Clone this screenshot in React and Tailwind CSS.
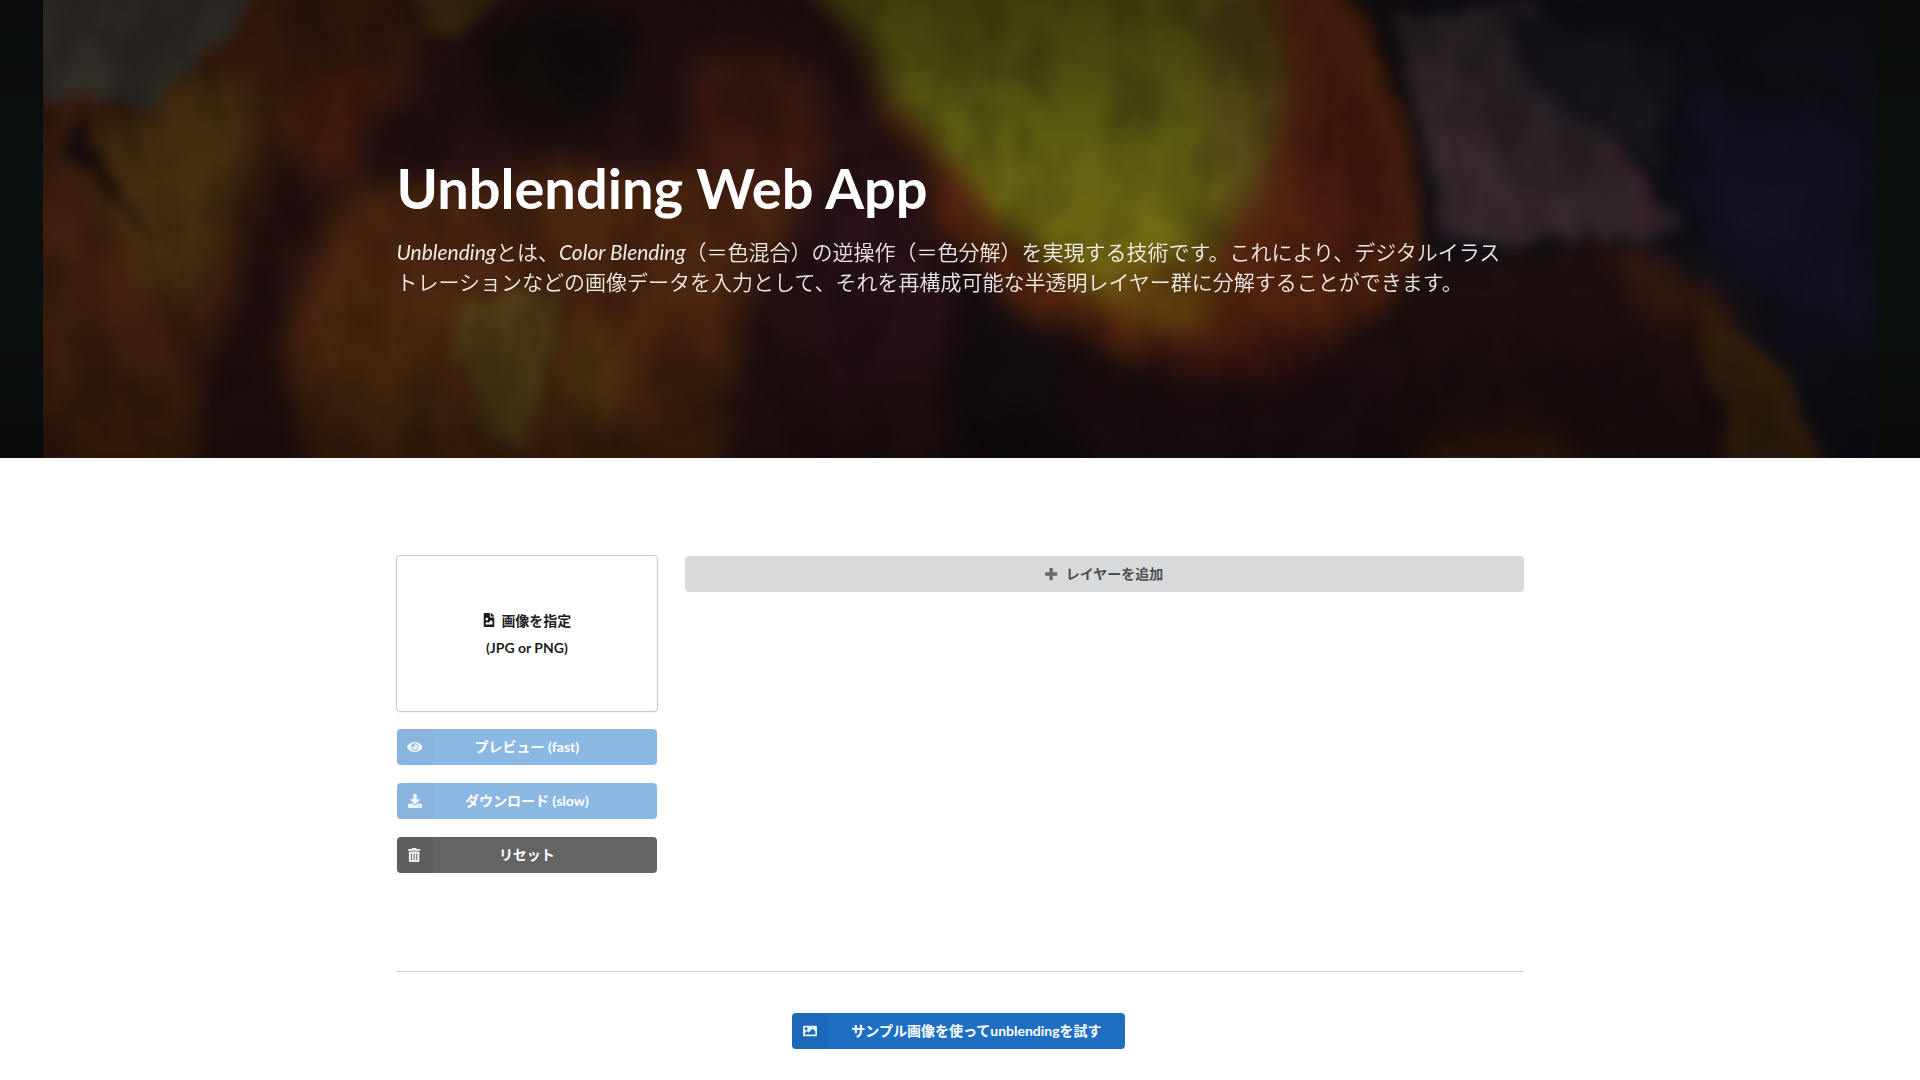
import { FaDownload, FaFileImage, FaImage } from "react-icons/fa";

function Painting() {
  return (
    <svg
      className="absolute inset-0 h-full w-full"
      viewBox="0 0 1920 458"
      preserveAspectRatio="xMidYMid slice"
      aria-hidden="true"
    >
      <defs>
        <filter id="brush" x="-10%" y="-10%" width="120%" height="120%" colorInterpolationFilters="sRGB">
          <feTurbulence type="fractalNoise" baseFrequency="0.012 0.01" numOctaves="3" seed="7" result="n" />
          <feDisplacementMap in="SourceGraphic" in2="n" scale="44" xChannelSelector="R" yChannelSelector="G" />
          <feGaussianBlur stdDeviation="14" />
        </filter>
        <filter id="edge" x="-10%" y="-10%" width="120%" height="120%" colorInterpolationFilters="sRGB">
          <feTurbulence type="fractalNoise" baseFrequency="0.03 0.02" numOctaves="3" seed="4" result="n" />
          <feDisplacementMap in="SourceGraphic" in2="n" scale="34" xChannelSelector="R" yChannelSelector="G" />
          <feGaussianBlur stdDeviation="7" />
        </filter>
        <filter id="grain" x="0" y="0" width="100%" height="100%" colorInterpolationFilters="sRGB">
          <feTurbulence type="fractalNoise" baseFrequency="0.018 0.012" numOctaves="4" seed="12" />
          <feColorMatrix values="0 0 0 0 0.03  0 0 0 0 0.02  0 0 0 0 0.03  2 0 0 0 -0.75" />
          <feGaussianBlur stdDeviation="3" />
        </filter>
        <linearGradient id="sun" x1="0" y1="0" x2="0" y2="1">
          <stop offset="0" stopColor="#4c4a10" />
          <stop offset="0.5" stopColor="#626414" />
          <stop offset="0.8" stopColor="#726b13" />
          <stop offset="1" stopColor="#65500f" />
        </linearGradient>
        <linearGradient id="shade" x1="0" y1="0" x2="0" y2="1">
          <stop offset="0" stopColor="#000" stopOpacity="0.22" />
          <stop offset="0.4" stopColor="#000" stopOpacity="0" />
          <stop offset="0.65" stopColor="#000" stopOpacity="0" />
          <stop offset="1" stopColor="#000" stopOpacity="0.3" />
        </linearGradient>
      </defs>
      <rect width="1920" height="458" fill="#1c100f" />
      <g filter="url(#brush)">
        <path d="M30 -40H440L400 120L330 230L250 380L240 500H30Z" fill="#3b1d0f" />
        <path d="M150 80L260 90L250 180L200 290L140 280L80 160Z" fill="#482f10" />
        <path d="M300 60H400L380 160L320 200L290 140Z" fill="#451d0f" />
        <path d="M45 190L130 270L190 360L190 500H45Z" fill="#42210f" />
        <path d="M270 150L340 190L300 320L280 500H195L200 380L240 280Z" fill="#24110f" />
        <path d="M390 -30H830L930 150L960 250L980 500H720L640 200L400 170L350 150L430 50Z" fill="#261212" />
        <path d="M460 30L560 10L600 90L560 150L480 120Z" fill="#160e0c" />
        <path d="M520 0L640 30L630 100L560 90Z" fill="#120d0e" />
        <path d="M690 100L740 40L800 70L830 150L790 220L670 190Z" fill="#401b12" />
        <path d="M360 190L480 175L620 165L760 190L790 250L740 310L720 500H300L290 340L310 250Z" fill="#4a2510" />
        <path d="M320 300L460 290L450 440L340 420Z" fill="#4f2c0f" />
        <path d="M560 320L640 330L620 440L560 430Z" fill="#563611" />
        <path d="M800 220L900 180L940 330L920 380L820 400Z" fill="#28111a" />
        <path d="M880 90L960 150L1030 260L1150 300L1220 240L1260 60L1280 -40L1340 -40L1405 70L1420 220L1390 310L1290 365L1150 370L1030 320L950 230Z" fill="#52230f" />
        <path d="M1400 -30H1920V500H1560L1430 250L1420 110Z" fill="#100f18" />
        <path d="M1700 100L1860 120L1860 330L1760 290L1690 200Z" fill="#141322" />
        <path d="M1430 260L1640 235L1710 330L1760 500H1400Z" fill="#1e1010" />
        <path d="M1600 240L1680 260L1740 330L1720 370L1640 310Z" fill="#351a10" />
        <path d="M1430 440L1500 430L1570 450L1600 500H1400Z" fill="#3c210e" />
        <path d="M960 250L1010 310L1100 380L1160 500H930Z" fill="#150d12" />
        <path d="M1050 370L1220 400L1400 340L1400 500H1100Z" fill="#1e0f12" />
        <path d="M790 -40H1270L1270 80L1250 190L1200 260L1110 310L1050 265L980 200L905 110L850 30Z" fill="url(#sun)" />
        <path d="M1190 -40H1270L1280 90L1260 210L1220 260L1210 100Z" fill="#56441a" opacity="0.7" />
        <path d="M1110 270L1220 245L1220 310L1140 350Z" fill="#62400f" />
        <path d="M1290 90L1360 60L1400 160L1390 260L1320 280Z" fill="#461b10" />
        <path d="M1130 350L1300 320L1360 330L1290 385L1180 380Z" fill="#3e1712" />
      </g>
      <g filter="url(#edge)">
        <path d="M55 150L90 180L150 250L195 330L170 280L110 180L80 110Z" fill="#1c100e" />
        <path d="M460 300L560 290L555 350L530 450L485 440L455 350Z" fill="#54461a" opacity="0.75" />
        <path d="M400 -30H520L480 25L430 35Z" fill="#48380f" opacity="0.7" />
        <path d="M20 -30H270L250 15L210 45L190 75L140 105L90 100L20 95Z" fill="#37322b" />
        <path d="M1340 -30H1390L1430 90L1450 230L1430 270L1425 160L1385 60Z" fill="#120e10" opacity="0.8" />
        <path d="M1395 15L1540 0L1560 80L1620 150L1690 230L1580 240L1450 245L1420 120Z" fill="#2f252b" />
        <path d="M1410 50L1480 90L1500 180L1590 200L1570 240L1455 240Z" fill="#3c2e34" opacity="0.8" />
        <path d="M1500 10L1670 50L1660 160L1600 130L1530 90Z" fill="#1c1820" />
        <path d="M1610 150L1640 170L1665 225L1650 225Z" fill="#42202a" opacity="0.6" />
        <path d="M1700 310L1760 350L1810 420L1830 500H1745L1710 390Z" fill="#3a240f" />
      </g>
      <rect width="1920" height="458" filter="url(#grain)" opacity="0.3" />
      <rect x="-10" width="53" height="458" fill="#0b0f0e" />
      <rect x="1877" width="53" height="458" fill="#0b0f0d" />
      <rect width="1920" height="458" fill="url(#shade)" />
    </svg>
  );
}

function PlusIcon({ className }) {
  return (
    <svg className={className} viewBox="0 0 448 512" fill="currentColor" aria-hidden="true">
      <path d="M448 294.2v-76.4c0-13.3-10.7-24-24-24H286.2V56c0-13.3-10.7-24-24-24h-76.4c-13.3 0-24 10.7-24 24v137.8H24c-13.3 0-24 10.7-24 24v76.4c0 13.3 10.7 24 24 24h137.8V456c0 13.3 10.7 24 24 24h76.4c13.3 0 24-10.7 24-24V318.2H424c13.3 0 24-10.7 24-24z" />
    </svg>
  );
}

function EyeIcon({ className }) {
  return (
    <svg className={className} viewBox="0 0 576 512" fill="currentColor" aria-hidden="true">
      <path d="M569.354 231.631C512.969 135.949 407.81 72 288 72 168.14 72 63.004 135.994 6.646 231.631a47.999 47.999 0 0 0 0 48.739C63.031 376.051 168.19 440 288 440c119.86 0 224.996-63.994 281.354-159.631a47.997 47.997 0 0 0 0-48.738zM288 392c-75.162 0-136-60.827-136-136 0-75.162 60.826-136 136-136 75.162 0 136 60.826 136 136 0 75.162-60.826 136-136 136zm104-136c0 57.438-46.562 104-104 104s-104-46.562-104-104c0-17.708 4.431-34.379 12.236-48.973l-.001.032c0 23.651 19.173 42.823 42.824 42.823s42.824-19.173 42.824-42.823c0-23.651-19.173-42.824-42.824-42.824l-.032.001C253.621 156.431 270.292 152 288 152c57.438 0 104 46.562 104 104z" />
    </svg>
  );
}

function TrashIcon({ className }) {
  return (
    <svg className={className} viewBox="0 0 448 512" fill="currentColor" aria-hidden="true">
      <path d="M0 84V56c0-13.3 10.7-24 24-24h112l9.4-18.7c4-8.200 12.3-13.3 21.4-13.3h114.3c9.100 0 17.4 5.100 21.5 13.3L312 32h112c13.3 0 24 10.7 24 24v28c0 6.600-5.400 12-12 12H12C5.400 96 0 90.600 0 84zm416 56v324c0 26.500-21.500 48-48 48H80c-26.500 0-48-21.500-48-48V140c0-6.600 5.400-12 12-12h360c6.600 0 12 5.400 12 12zm-272 68c0-8.800-7.200-16-16-16s-16 7.200-16 16v224c0 8.800 7.200 16 16 16s16-7.200 16-16V208zm96 0c0-8.800-7.200-16-16-16s-16 7.200-16 16v224c0 8.800 7.200 16 16 16s16-7.200 16-16V208zm96 0c0-8.800-7.200-16-16-16s-16 7.200-16 16v224c0 8.800 7.200 16 16 16s16-7.200 16-16V208z" />
    </svg>
  );
}

function LabeledButton({ icon: Icon, children, className, strip = "bg-black/5" }) {
  return (
    <button type="button" className={`relative h-9 rounded text-sm font-bold text-white ${className}`}>
      <span className={`absolute inset-y-0 left-0 flex w-9 items-center justify-center rounded-l ${strip}`}>
        <Icon className="h-[14px] w-auto opacity-90" aria-hidden="true" />
      </span>
      {children}
    </button>
  );
}

export default function App() {
  return (
    <div className="min-h-screen bg-white font-['Lato','Noto_Sans_CJK_JP',sans-serif] text-sm text-black/90">
      <header className="relative overflow-hidden bg-[#1c100f] pt-[152px] pb-[161px]">
        <Painting />
        <div className="relative mx-auto w-full max-w-[1127px]">
          <h1 className="text-[56px] leading-[72px] font-bold text-white">Unblending Web App</h1>
          <p className="mt-[13px] pr-3 text-[21px] leading-[30px] font-[350] text-white/90">
            <em className="font-normal">Unblending</em>とは、<em className="font-normal">Color Blending</em>
            （＝色混合）の逆操作（＝色分解）を実現する技術です。これにより、デジタルイラストレーションなどの画像データを入力として、それを再構成可能な半透明レイヤー群に分解することができます。
          </p>
        </div>
      </header>

      <main className="mx-auto w-full max-w-[1127px] pt-[98px]">
        <div className="grid grid-cols-4 items-start gap-7">
          <div className="flex flex-col gap-[18px]">
            <button
              type="button"
              className="-m-px flex h-[157px] flex-col items-center justify-center rounded border border-[#c8c8c9] bg-white text-sm leading-[27px] font-bold shadow-xs"
            >
              <span className="flex items-center gap-[5px]">
                <FaFileImage className="h-[14px] w-auto" aria-hidden="true" />
                画像を指定
              </span>
              <span>(JPG or PNG)</span>
            </button>
            <LabeledButton icon={EyeIcon} className="bg-[#8bb8e3] px-14" strip="bg-black/2">
              プレビュー (fast)
            </LabeledButton>
            <LabeledButton icon={FaDownload} className="bg-[#8bb8e3] px-14" strip="bg-black/2">
              ダウンロード (slow)
            </LabeledButton>
            <LabeledButton icon={TrashIcon} className="bg-[#646464] px-14">
              リセット
            </LabeledButton>
          </div>
          <button
            type="button"
            className="col-span-3 flex h-9 items-center justify-center gap-2 rounded bg-[#d8d9db] text-sm font-bold text-[#4d4e4f]"
          >
            <PlusIcon className="h-[14px] w-auto opacity-80" />
            レイヤーを追加
          </button>
        </div>
        <hr className="mt-[98px] border-[#d4d4d5]" />
        <div className="flex justify-center pt-[41px] pr-[3px] pb-[31px]">
          <LabeledButton icon={FaImage} className="bg-[#1e6fc4] pr-[23px] pl-[59px]">
            サンプル画像を使ってunblendingを試す
          </LabeledButton>
        </div>
      </main>
    </div>
  );
}
